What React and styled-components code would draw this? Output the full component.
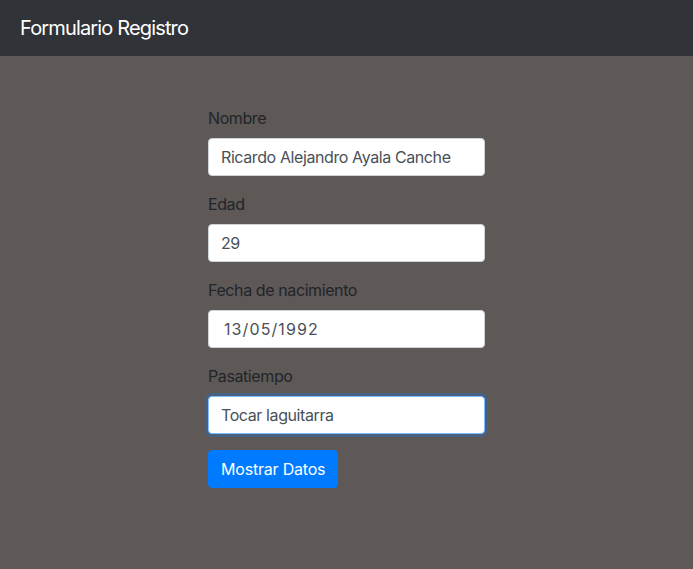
import React from "react";
import styled, { createGlobalStyle } from "styled-components";

const Global = createGlobalStyle`
  html, body { margin: 0; padding: 0; height: 100%; }
  body {
    font-family: Inter, "Liberation Sans", sans-serif;
    font-size: 16px;
    line-height: 1.5;
    color: #212529;
    background: #5e5857;
  }
  * { box-sizing: border-box; }
`;

const Page = styled.div`
  min-height: 100vh;
  background: #5e5857;
`;

const Navbar = styled.nav`
  height: 56px;
  background: #303438;
  display: flex;
  align-items: center;
  padding: 0 20px;
`;

const Brand = styled.span`
  color: #fff;
  font-size: 20px;
  line-height: 30px;
  letter-spacing: -0.85px;
`;

const Main = styled.main`
  display: flex;
  justify-content: center;
  padding-top: 50px;
`;

const Form = styled.form`
  width: 277px;
`;

const Group = styled.div`
  margin-bottom: 16px;
`;

const Label = styled.label`
  display: block;
  margin-bottom: 8px;
  color: #212529;
  line-height: 24px;
  font-size: 16px;
  letter-spacing: -0.4px;
`;

const Input = styled.input`
  display: block;
  width: 100%;
  height: 38px;
  padding: 6px ${(p) => (p.$date ? "15px" : "12px")};
  font-family: inherit;
  font-size: 16px;
  line-height: 24px;
  letter-spacing: ${(p) => (p.$date ? "1.1px" : "-0.4px")};
  color: #495057;
  background: #fff;
  border: 1px solid ${(p) => (p.$focused ? "#80bdff" : "#ced4da")};
  border-radius: 4px;
  outline: none;
  box-shadow: ${(p) => (p.$focused ? "0 0 0 3px rgba(0, 123, 255, 0.25)" : "none")};
`;

const Button = styled.button`
  display: inline-block;
  height: 38px;
  padding: 6px 12px;
  font-family: inherit;
  font-size: 16px;
  line-height: 24px;
  letter-spacing: -0.2px;
  color: #fff;
  background: #007bff;
  border: 1px solid #007bff;
  border-radius: 4px;
  cursor: pointer;
`;

const fields = [
  { label: "Nombre", value: "Ricardo Alejandro Ayala Canche" },
  { label: "Edad", value: "29" },
  { label: "Fecha de nacimiento", value: "13/05/1992", date: true },
  { label: "Pasatiempo", value: "Tocar laguitarra", focused: true },
];

export default function App() {
  return (
    <>
      <Global />
      <Page>
        <Navbar>
          <Brand>Formulario Registro</Brand>
        </Navbar>
        <Main>
          <Form onSubmit={(e) => e.preventDefault()}>
            {fields.map((f) => (
              <Group key={f.label}>
                <Label>{f.label}</Label>
                <Input
                  type="text"
                  defaultValue={f.value}
                  $date={f.date}
                  $focused={f.focused}
                />
              </Group>
            ))}
            <Button type="button">Mostrar Datos</Button>
          </Form>
        </Main>
      </Page>
    </>
  );
}
